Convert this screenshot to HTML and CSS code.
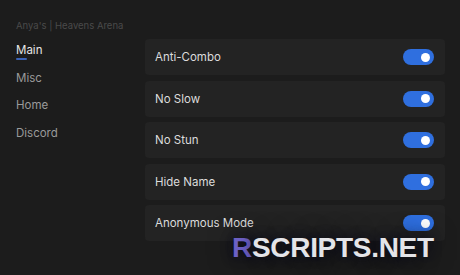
FILE: index.html
```html
<!DOCTYPE html>
<html>
<head>
<meta charset="utf-8">
<link rel="stylesheet" href="styles.css">
</head>
<body>
<div class="window">
  <aside class="sidebar">
    <div class="title">Anya's | Heavens Arena</div>
    <nav class="nav">
      <div class="nav-item active">Main</div>
      <div class="nav-item">Misc</div>
      <div class="nav-item">Home</div>
      <div class="nav-item">Discord</div>
    </nav>
  </aside>
  <main class="content">
    <div class="card"><span class="label">Anti-Combo</span><span class="toggle"><span class="knob"></span></span></div>
    <div class="card"><span class="label">No Slow</span><span class="toggle"><span class="knob"></span></span></div>
    <div class="card"><span class="label">No Stun</span><span class="toggle"><span class="knob"></span></span></div>
    <div class="card"><span class="label">Hide Name</span><span class="toggle"><span class="knob"></span></span></div>
    <div class="card"><span class="label">Anonymous Mode</span><span class="toggle"><span class="knob"></span></span></div>
  </main>
  <div class="watermark"><span class="wm-r">R</span>SCRIPTS.NET</div>
</div>
</body>
</html>
```
FILE: styles.css
```css
html, body {
  margin: 0;
  padding: 0;
  background: #1c1c1c;
}
.window {
  position: relative;
  width: 460px;
  height: 275px;
  display: flex;
  font-family: "Inter", "Liberation Sans", sans-serif;
  overflow: hidden;
}
.sidebar {
  width: 145px;
  flex: none;
  padding: 20px 0 0 16px;
  box-sizing: border-box;
}
.title {
  font-size: 9.5px;
  color: #4a4a4a;
  line-height: 12px;
  white-space: nowrap;
}
.nav {
  margin-top: 10px;
  display: flex;
  flex-direction: column;
}
.nav-item {
  font-size: 11.5px;
  color: #9a9a9a;
  height: 27.6px;
  line-height: 16px;
  position: relative;
}
.nav-item.active {
  color: #e6e6e6;
}
.nav-item.active::after {
  content: "";
  position: absolute;
  left: 0;
  top: 16px;
  width: 11px;
  height: 2px;
  border-radius: 1px;
  background: #3b63b8;
}
.content {
  width: 300px;
  flex: none;
  padding-top: 39px;
  display: flex;
  flex-direction: column;
  gap: 5.5px;
}
.card {
  height: 36px;
  background: #232323;
  border-radius: 4px;
  display: flex;
  align-items: center;
  justify-content: space-between;
  padding: 0 11px 0 10px;
}
.label {
  font-size: 11.5px;
  color: #dcdcdc;
}
.toggle {
  width: 31px;
  height: 16px;
  border-radius: 8px;
  background: #2f6fdf;
  display: flex;
  align-items: center;
  justify-content: flex-end;
  padding-right: 4px;
  box-sizing: border-box;
}
.knob {
  width: 9px;
  height: 9px;
  border-radius: 50%;
  background: #ffffff;
}
.watermark {
  position: absolute;
  left: 232px;
  top: 232px;
  font-family: "Liberation Sans", sans-serif;
  font-weight: bold;
  font-size: 28px;
  line-height: 32px;
  color: #e4e4e8;
  letter-spacing: -0.3px;
  text-shadow: 0 0 12px rgba(10, 10, 25, 0.9), 0 0 24px rgba(10, 10, 25, 0.8);
}
.wm-r {
  color: #6f62c8;
}
```
